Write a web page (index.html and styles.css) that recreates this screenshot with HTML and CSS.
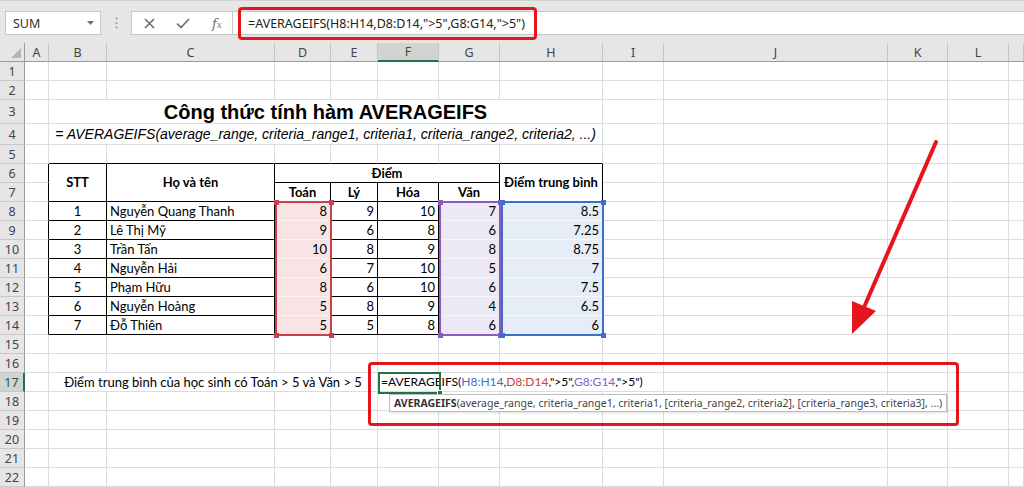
FILE: index.html
```html
<!DOCTYPE html>
<html lang="vi">
<head>
<meta charset="utf-8">
<title>AVERAGEIFS</title>
<link rel="stylesheet" href="styles.css">
</head>
<body>
<div class="app">
  <div class="toolbar">
    <div class="namebox"><span>SUM</span><svg class="caret" width="7" height="4" viewBox="0 0 7 4"><path d="M0 0h7L3.5 4z" fill="#6f6f6f"/></svg></div>
    <div class="grip"><svg width="3" height="12" viewBox="0 0 3 12"><circle cx="1.5" cy="1.5" r="1" fill="#9a9a9a"/><circle cx="1.5" cy="6" r="1" fill="#9a9a9a"/><circle cx="1.5" cy="10.5" r="1" fill="#9a9a9a"/></svg></div>
    <div class="fbtns">
      <svg width="11" height="11" viewBox="0 0 11 11"><path d="M1 1L10 10M10 1L1 10" stroke="#6e6e6e" stroke-width="1.6" fill="none"/></svg>
      <svg width="14" height="11" viewBox="0 0 14 11"><path d="M1 5.5L5 9.5L13 1" stroke="#6e6e6e" stroke-width="1.7" fill="none"/></svg>
      <span class="fx">f<span class="fxs">x</span></span>
    </div>
    <div class="finput"><span class="fbox">=AVERAGEIFS(H8:H14,D8:D14,"&gt;5",G8:G14,"&gt;5")</span></div>
  </div>

  <div class="sheet">
    <div class="corner"><svg width="10" height="10" viewBox="0 0 10 10"><path d="M10 0V10H0z" fill="#b5b5b5"/></svg></div>
    <div class="ch">A</div><div class="ch">B</div><div class="ch">C</div><div class="ch">D</div><div class="ch">E</div><div class="ch sel">F</div><div class="ch">G</div><div class="ch">H</div><div class="ch">I</div><div class="ch">J</div><div class="ch">K</div><div class="ch">L</div><div class="ch"></div>

    <div class="rh">1</div><i></i><i></i><i></i><i></i><i></i><i></i><i></i><i></i><i></i><i></i><i></i><i></i><i></i>
    <div class="rh">2</div><i></i><i></i><i></i><i></i><i></i><i></i><i></i><i></i><i></i><i></i><i></i><i></i><i></i>
    <div class="rh">3</div><i></i><div class="title">Công thức tính hàm AVERAGEIFS</div><i></i><i></i><i></i><i></i><i></i>
    <div class="rh">4</div><i></i><div class="syntax">= AVERAGEIFS(average_range, criteria_range1, criteria1, criteria_range2, criteria2, ...)</div><i></i><i></i><i></i><i></i><i></i>
    <div class="rh">5</div><i></i><i class="bb"></i><i class="bb"></i><i class="bb"></i><i class="bb"></i><i class="bb"></i><i class="bb"></i><i class="bb"></i><i></i><i></i><i></i><i></i><i></i>
    <div class="rh">6</div><i class="br"></i><div class="t th r2">STT</div><div class="t th r2">Họ và tên</div><div class="t th c4">Điểm</div><div class="t th r2">Điểm trung bình</div><i></i><i></i><i></i><i></i><i></i>
    <div class="rh">7</div><i class="br"></i><div class="t th">Toán</div><div class="t th">Lý</div><div class="t th">Hóa</div><div class="t th">Văn</div><i></i><i></i><i></i><i></i><i></i>

    <div class="rh">8</div><i class="br"></i><div class="t ct">1</div><div class="t nm">Nguyễn Quang Thanh</div><div class="t n pk">8</div><div class="t n">9</div><div class="t n">10</div><div class="t n pu">7</div><div class="t n bl">8.5</div><i></i><i></i><i></i><i></i><i></i>
    <div class="rh">9</div><i class="br"></i><div class="t ct">2</div><div class="t nm">Lê Thị Mỹ</div><div class="t n pk">9</div><div class="t n">6</div><div class="t n">8</div><div class="t n pu">6</div><div class="t n bl">7.25</div><i></i><i></i><i></i><i></i><i></i>
    <div class="rh">10</div><i class="br"></i><div class="t ct">3</div><div class="t nm">Trần Tấn</div><div class="t n pk">10</div><div class="t n">8</div><div class="t n">9</div><div class="t n pu">8</div><div class="t n bl">8.75</div><i></i><i></i><i></i><i></i><i></i>
    <div class="rh">11</div><i class="br"></i><div class="t ct">4</div><div class="t nm">Nguyễn Hải</div><div class="t n pk">6</div><div class="t n">7</div><div class="t n">10</div><div class="t n pu">5</div><div class="t n bl">7</div><i></i><i></i><i></i><i></i><i></i>
    <div class="rh">12</div><i class="br"></i><div class="t ct">5</div><div class="t nm">Phạm Hữu</div><div class="t n pk">8</div><div class="t n">6</div><div class="t n">10</div><div class="t n pu">6</div><div class="t n bl">7.5</div><i></i><i></i><i></i><i></i><i></i>
    <div class="rh">13</div><i class="br"></i><div class="t ct">6</div><div class="t nm">Nguyễn Hoàng</div><div class="t n pk">5</div><div class="t n">8</div><div class="t n">9</div><div class="t n pu">4</div><div class="t n bl">6.5</div><i></i><i></i><i></i><i></i><i></i>
    <div class="rh">14</div><i class="br"></i><div class="t ct">7</div><div class="t nm">Đỗ Thiên</div><div class="t n pk">5</div><div class="t n">5</div><div class="t n">8</div><div class="t n pu">6</div><div class="t n bl">6</div><i></i><i></i><i></i><i></i><i></i>

    <div class="rh">15</div><i></i><i></i><i></i><i></i><i></i><i></i><i></i><i></i><i></i><i></i><i></i><i></i><i></i>
    <div class="rh">16</div><i></i><i></i><i></i><i></i><i></i><i></i><i></i><i></i><i></i><i></i><i></i><i></i><i></i>
    <div class="rh sel">17</div><i></i><div class="label">Điểm trung bình của học sinh có Toán &gt; 5 và Văn &gt; 5</div><i></i><i></i><i></i><i></i><i></i><i></i><i></i><i></i>
    <div class="rh">18</div><i></i><i></i><i></i><i></i><i></i><i></i><i></i><i></i><i></i><i></i><i></i><i></i><i></i>
    <div class="rh">19</div><i></i><i></i><i></i><i></i><i></i><i></i><i></i><i></i><i></i><i></i><i></i><i></i><i></i>
    <div class="rh">20</div><i></i><i></i><i></i><i></i><i></i><i></i><i></i><i></i><i></i><i></i><i></i><i></i><i></i>
    <div class="rh">21</div><i></i><i></i><i></i><i></i><i></i><i></i><i></i><i></i><i></i><i></i><i></i><i></i><i></i>
    <div class="rh">22</div><i></i><i></i><i></i><i></i><i></i><i></i><i></i><i></i><i></i><i></i><i></i><i></i><i></i>
  </div>

  <!-- range highlights (overlays) -->
  <div class="rng rng-d"><s class="h tl"></s><s class="h tr"></s><s class="h bl2"></s><s class="h br2"></s></div>
  <div class="rng rng-g"><s class="h tl"></s><s class="h tr"></s><s class="h bl2"></s><s class="h br2"></s></div>
  <div class="rng rng-h"><s class="h tl"></s><s class="h tr"></s><s class="h bl2"></s><s class="h br2"></s></div>

  <!-- in-cell editor -->
  <div class="editor">=AVERAGEIFS(<span class="cb">H8:H14</span>,<span class="cr">D8:D14</span>,"&gt;5",<span class="cp">G8:G14</span>,"&gt;5")</div>
  <div class="active"><s class="fill"></s></div>

  <div class="tip"><b>AVERAGEIFS</b>(average_range, criteria_range1, criteria1, [criteria_range2, criteria2], [criteria_range3, criteria3], ...)</div>

  <div class="callout"></div>

  <svg class="arrow" width="120" height="220" viewBox="0 0 120 220">
    <line x1="106" y1="12" x2="35" y2="175" stroke="#e8141c" stroke-width="4" stroke-linecap="round"/>
    <polygon points="22,204 46,181 22,171" fill="#e8141c"/>
  </svg>
</div>
</body>
</html>
```

FILE: styles.css
```css
* { box-sizing: border-box; margin: 0; padding: 0; }
html, body { width: 1024px; height: 487px; overflow: hidden; background: #fff; }
body { font-family: "Noto Sans", sans-serif; color: #000; }

.app { position: relative; width: 1024px; height: 487px; overflow: hidden; }

/* ---------- toolbar ---------- */
.toolbar {
  height: 43px;
  background: #e6e6e6;
  border-top: 1px solid #d2d2d2;
  display: flex;
  align-items: flex-start;
  padding: 10px 0 0 5px;
}
.namebox {
  width: 96px; height: 24px;
  background: #fff;
  border: 1px solid #c6c6c6;
  display: flex; align-items: center; justify-content: space-between;
  padding: 0 6px 0 7px;
  font-size: 12.5px; color: #333;
}
.grip { width: 30px; height: 24px; display: flex; align-items: center; justify-content: center; }
.fbtns {
  width: 102px; height: 24px;
  background: #fff;
  border: 1px solid #c6c6c6;
  display: grid; grid-template-columns: 34px 34px 34px;
  align-items: center; justify-items: center;
}
.fx { font-family: "DejaVu Serif", serif; font-style: italic; font-size: 13px; color: #6e6e6e; line-height: 1; }
.fxs { font-size: 9px; }
.finput {
  flex: 1; height: 24px;
  background: #fff;
  border-top: 1px solid #c6c6c6; border-bottom: 1px solid #c6c6c6;
  display: flex; align-items: center;
}
.fbox {
  margin-left: 5px;
  width: 299px; height: 33px;
  border: 3px solid #e8141c; border-radius: 4px;
  display: flex; align-items: center;
  padding-left: 7px;
  font-size: 12.5px; color: #222;
  white-space: nowrap;
}

/* ---------- sheet grid ---------- */
.sheet {
  display: grid;
  grid-template-columns: 25px 24px 58px 168px 56px 47px 61px 61px 103px 61px 224px 60px 61px 15px;
  grid-template-rows: 19px 19px 19px 24px 21px repeat(18, 19px);
  font-family: Lato, "Noto Sans", sans-serif;
  font-size: 13px;
}
.sheet > i { border-right: 1px solid #dadcdd; border-bottom: 1px solid #dadcdd; }
.sheet > i.bb { border-bottom-color: #000; }
.sheet > i.br { border-right-color: #000; }

.corner { background: #e6e6e6; border-right: 1px solid #9b9b9b; border-bottom: 1px solid #9b9b9b; display: flex; align-items: flex-end; justify-content: flex-end; padding: 0 3px 3px 0; }
.ch {
  background: #e6e6e6;
  border-right: 1px solid #c4c4c4; border-bottom: 1px solid #9b9b9b;
  display: flex; align-items: center; justify-content: center;
  font-family: "Noto Sans", sans-serif; font-size: 12.5px; color: #444;
}
.ch.sel { background: #d3d3d3; border-bottom: 2px solid #217346; color: #1e5e35; }
.rh {
  background: #e6e6e6;
  border-right: 1px solid #9b9b9b; border-bottom: 1px solid #c8c8c8;
  display: flex; align-items: center; justify-content: center;
  font-family: "Noto Sans", sans-serif; font-size: 12.5px; color: #444;
}
.rh.sel { background: #d3d3d3; border-right: 2px solid #217346; color: #1e5e35; }

.title {
  grid-column: span 7;
  border-bottom: 1px solid #dadcdd; border-right: 1px solid #dadcdd;
  display: flex; justify-content: center; align-items: flex-end;
  font-family: "Liberation Sans", Arial, sans-serif; font-weight: bold; font-size: 20px; line-height: 22px;
  white-space: nowrap;
}
.syntax {
  grid-column: span 7;
  border-bottom: 1px solid #dadcdd; border-right: 1px solid #dadcdd;
  display: flex; justify-content: center; align-items: flex-end;
  font-family: "Liberation Sans", Arial, sans-serif; font-style: italic; font-size: 14px; line-height: 17px;
  padding-bottom: 1px;
  white-space: nowrap;
}

.t {
  border-right: 1px solid #000; border-bottom: 1px solid #000;
  display: flex; align-items: flex-end;
  line-height: 16px; padding: 0 3px 1px;
  white-space: nowrap;
}
.th { font-weight: bold; justify-content: center; }
.r2 { grid-row: span 2; align-items: center; }
.c4 { grid-column: span 4; }
.ct { justify-content: center; }
.nm { justify-content: flex-start; }
.n { justify-content: flex-end; }
.pk { background: #f8e4e5; border-bottom-color: #fbf3f3; }
.pu { background: #ede9f4; border-bottom-color: #f7f5fa; }
.bl { background: #e7edf7; border-bottom-color: #f4f7fb; }

.label {
  grid-column: span 4;
  border-bottom: 1px solid #dadcdd; border-right: 1px solid #dadcdd;
  display: flex; justify-content: center; align-items: flex-end;
  line-height: 16px; padding-bottom: 1px;
  white-space: nowrap;
}

/* ---------- overlays ---------- */
.rng { position: absolute; top: 201px; height: 135px; border: 2px solid; }
.rng-d { left: 275px; width: 57px; border-color: #c8414b; }
.rng-g { left: 439px; width: 62px; border-color: #8a5bbf; }
.rng-h { left: 501px; width: 103px; border-color: #3c6fc8; }
.h { position: absolute; width: 5px; height: 5px; border: 0; }
.rng-d .h { background: #c8414b; }
.rng-g .h { background: #8a5bbf; }
.rng-h .h { background: #3c6fc8; }
.h.tl { left: -3.5px; top: -3.5px; }
.h.tr { right: -3.5px; top: -3.5px; }
.h.bl2 { left: -3.5px; bottom: -3.5px; }
.h.br2 { right: -3.5px; bottom: -3.5px; }

.editor {
  position: absolute; left: 380px; top: 373px; height: 18px; width: 280px;
  background: #fff;
  font-family: Lato, "Noto Sans", sans-serif; font-size: 12px; line-height: 16px;
  padding: 1px 0 0 1px;
  white-space: nowrap;
}
.cb { color: #3c6fc8; }
.cr { color: #d04040; }
.cp { color: #8a5bbf; }
.active { position: absolute; left: 378px; top: 372px; width: 63px; height: 22px; border: 2px solid #217346; }
.fill { position: absolute; right: -4px; bottom: -4px; width: 6px; height: 6px; background: #217346; border: 1px solid #fff; }

.tip {
  position: absolute; left: 389px; top: 394px; width: 558px; height: 18px;
  background: #fff;
  border: 1px solid #bdbdbd;
  box-shadow: 1px 1px 2px rgba(0,0,0,0.12);
  font-family: "Noto Sans", sans-serif; font-size: 10.5px; color: #444; line-height: 16px;
  padding-left: 4px;
  white-space: nowrap;
}
.tip b { color: #333; }

.callout { position: absolute; left: 368px; top: 362px; width: 591px; height: 64px; border: 3px solid #e8141c; border-radius: 4px; }

.arrow { position: absolute; left: 830px; top: 130px; }
```
